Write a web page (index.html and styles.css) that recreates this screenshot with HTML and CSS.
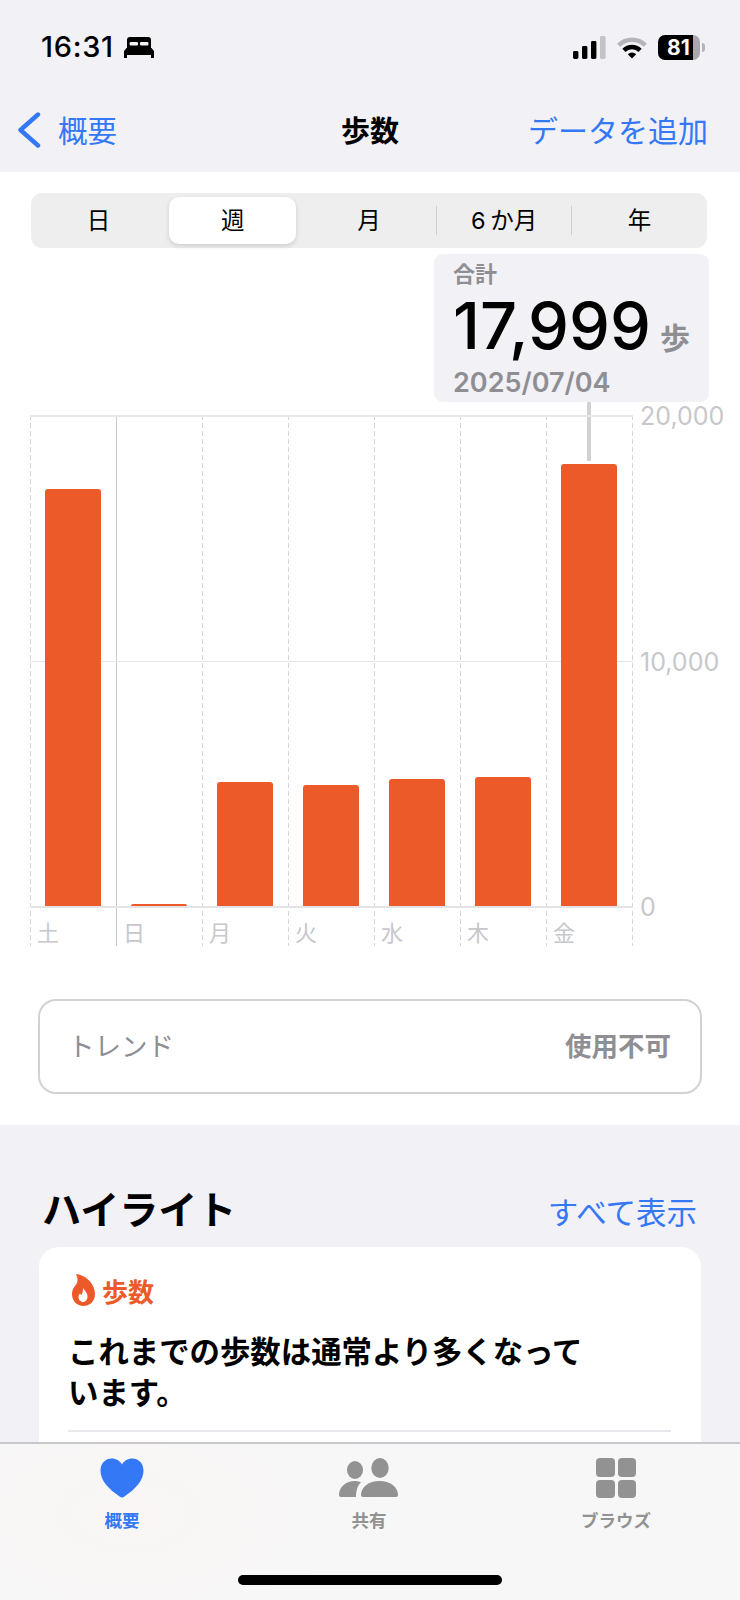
FILE: index.html
```html
<!DOCTYPE html>
<html lang="ja">
<head>
<meta charset="utf-8">
<title>歩数</title>
<link rel="stylesheet" href="styles.css">
</head>
<body>
<div class="screen">
  <header class="status">
    <div class="status-left">
      <span class="time">16:31</span>
      <svg class="bed" width="30" height="21" viewBox="0 0 30 21">
        <path d="M6 0h18a3 3 0 0 1 3 3v8H3V3a3 3 0 0 1 3-3z" fill="#000"/>
        <rect x="5.6" y="5" width="8.4" height="3.4" rx="1" fill="#f1f1f6"/>
        <rect x="16" y="5" width="8.4" height="3.4" rx="1" fill="#f1f1f6"/>
        <path d="M2.5 11h25L30 14v4H0v-4z" fill="#000"/>
        <rect x="0" y="18" width="3" height="3" fill="#000"/>
        <rect x="27" y="18" width="3" height="3" fill="#000"/>
      </svg>
    </div>
    <div class="status-right">
      <svg class="signal" width="33" height="23" viewBox="0 0 33 23">
        <rect x="0" y="15" width="5.4" height="8" rx="1.4" fill="#000"/>
        <rect x="9" y="10" width="5.4" height="13" rx="1.4" fill="#000"/>
        <rect x="18" y="5" width="5.4" height="18" rx="1.4" fill="#000"/>
        <rect x="27" y="0" width="5.6" height="23" rx="1.4" fill="#c4c4c8"/>
      </svg>
      <svg class="wifi" width="30" height="23" viewBox="0 0 30 23">
        <path d="M1.7 9.2A18.8 18.8 0 0 1 28.3 9.2" fill="none" stroke="#b5b5b9" stroke-width="4.4"/>
        <path d="M6.9 14.4A11.5 11.5 0 0 1 23.1 14.4" fill="none" stroke="#000" stroke-width="4.4"/>
        <path d="M15 22.5L10.8 18.3A6 6 0 0 1 19.2 18.3Z" fill="#000"/>
      </svg>
      <div class="battery"><span class="battery-level">81</span><span class="battery-cap"></span></div>
    </div>
  </header>

  <nav class="nav">
    <a class="nav-back">
      <svg width="24" height="36" viewBox="0 0 24 36"><path d="M21 2.5L3.5 18L21 33.5" fill="none" stroke="#3478f6" stroke-width="4.4" stroke-linecap="round" stroke-linejoin="round"/></svg>
      <span>概要</span>
    </a>
    <div class="nav-title">歩数</div>
    <a class="nav-action">データを追加</a>
  </nav>

  <main class="detail">
    <div class="segments">
      <div class="segment">日</div>
      <div class="segment selected">週</div>
      <div class="segment">月</div>
      <div class="segment divided">6 か月</div>
      <div class="segment divided">年</div>
    </div>

    <aside class="tip">
      <div class="tip-label">合計</div>
      <div class="tip-value"><span class="tip-number">17,999</span><span class="tip-unit">歩</span></div>
      <div class="tip-date">2025/07/04</div>
    </aside>

    <section class="chart">
      <div class="plot">
        <div class="midline"></div>
        <div class="day">
          <div class="bar-area"><div class="bar" style="height:417px"></div></div>
          <div class="day-label">土</div>
        </div>
        <div class="day cursor">
          <div class="bar-area"><div class="bar" style="height:2px"></div></div>
          <div class="day-label">日</div>
        </div>
        <div class="day">
          <div class="bar-area"><div class="bar" style="height:124px"></div></div>
          <div class="day-label">月</div>
        </div>
        <div class="day">
          <div class="bar-area"><div class="bar" style="height:121px"></div></div>
          <div class="day-label">火</div>
        </div>
        <div class="day">
          <div class="bar-area"><div class="bar" style="height:127px"></div></div>
          <div class="day-label">水</div>
        </div>
        <div class="day">
          <div class="bar-area"><div class="bar" style="height:129px"></div></div>
          <div class="day-label">木</div>
        </div>
        <div class="day last">
          <div class="bar-area"><div class="bar" style="height:442px"></div></div>
          <div class="day-label">金</div>
        </div>
      </div>
      <div class="axis">
        <span>20,000</span>
        <span>10,000</span>
        <span>0</span>
      </div>
    </section>

    <div class="trend">
      <span class="trend-label">トレンド</span>
      <span class="trend-value">使用不可</span>
    </div>
  </main>

  <section class="highlights">
    <div class="highlights-head">
      <h2>ハイライト</h2>
      <a>すべて表示</a>
    </div>
    <article class="card">
      <div class="card-tag">
        <svg width="23" height="32" viewBox="0 0 23 32">
          <path d="M4 0C13 1 23 9 23 20C23 27 18 32 11.5 32C5 32 0 27 0 20C0 15.5 2.5 12.5 4.5 10C6 7.5 6 4 4 0Z" fill="#ed5a29"/>
          <path d="M11 14C14 17.5 15.5 20 15.5 22.5C15.5 25.5 13.5 28 11 28C8.5 28 6.5 25.5 6.5 23C6.5 21.5 7.2 20.5 8 19.5C8.5 20.3 9 20.8 9.5 21C10.5 19 11.2 16.5 11 14Z" fill="#fff"/>
        </svg>
        <span>歩数</span>
      </div>
      <p class="card-text">これまでの歩数は通常より多くなって<br>います。</p>
      <div class="card-rule"></div>
    </article>
  </section>

  <footer class="tabbar">
    <div class="tabs">
      <div class="tab active">
        <svg width="44" height="40" viewBox="0 0 44 40"><path d="M22 39.5C21.3 39.5 20.4 39 19.6 38.4C8.5 31 0.5 22.5 0.5 12.5C0.5 5.3 5.5 0.5 11.8 0.5C16.2 0.5 19.8 2.8 22 6.4C24.2 2.8 27.8 0.5 32.2 0.5C38.5 0.5 43.5 5.3 43.5 12.5C43.5 22.5 35.5 31 24.4 38.4C23.6 39 22.7 39.5 22 39.5Z" fill="#3478f6"/></svg>
        <span>概要</span>
      </div>
      <div class="tab">
        <svg width="60" height="40" viewBox="0 0 60 40">
          <ellipse cx="16" cy="12" rx="8" ry="9" fill="#929292"/>
          <ellipse cx="41" cy="10" rx="8.7" ry="10" fill="#929292"/>
          <path d="M24 39Q22 39 22 37C22 29 30 23 40.5 23C51 23 59 29 59 37Q59 39 57 39Z" fill="#929292"/>
          <path d="M2 39Q0 39 0 37C0 29 7 23 16 23C18 23 20 23.4 22 24.2C19 27 17 32 17 39Z" fill="#929292"/>
        </svg>
        <span>共有</span>
      </div>
      <div class="tab">
        <div class="tab-grid"><i></i><i></i><i></i><i></i></div>
        <span>ブラウズ</span>
      </div>
    </div>
    <div class="home-bar"></div>
  </footer>
</div>
</body>
</html>
```
FILE: styles.css
```css
* { box-sizing: border-box; }
html, body { margin: 0; padding: 0; }
body {
  width: 740px;
  height: 1600px;
  background: #f1f1f6;
  font-family: Inter, "Noto Sans CJK JP", sans-serif;
  color: #000;
  overflow: hidden;
}
.screen {
  position: relative;
  width: 740px;
  height: 1600px;
  overflow: hidden;
  display: flex;
  flex-direction: column;
}

/* status bar */
.status {
  height: 88px;
  flex: none;
  padding: 32px 40px 0 41px;
  display: flex;
  justify-content: space-between;
  align-items: flex-start;
}
.status-left { display: flex; align-items: center; gap: 10px; height: 30px; }
.time { font-size: 29px; font-weight: 500; line-height: 30px; letter-spacing: 0.7px; }
.status-right { display: flex; align-items: center; gap: 11px; height: 30px; }
.battery {
  position: relative;
  width: 42px;
  height: 25px;
  border-radius: 7px;
  background: linear-gradient(to right, #000 0 35px, #a9a9ad 35px);
  color: #fff;
  font-size: 21px;
  font-weight: 700;
  line-height: 25px;
  padding-left: 9px;
}
.battery-cap {
  position: absolute;
  left: 44px;
  top: 8px;
  width: 3px;
  height: 9px;
  border-radius: 0 3px 3px 0;
  background: #b5b5b9;
}

/* navigation bar */
.nav {
  height: 84px;
  flex: none;
  display: grid;
  grid-template-columns: 1fr auto 1fr;
  align-items: center;
  padding: 0 32px 2px;
}
.nav-back {
  display: flex;
  align-items: center;
  gap: 17px;
  margin-left: -15px;
  color: #3478f6;
  font-size: 29.5px;
}
.nav-back svg { margin-top: 2px; }
.nav-title { font-size: 29px; font-weight: 600; }
.nav-action { justify-self: end; color: #3478f6; font-size: 30px; white-space: nowrap; }

/* detail */
.detail {
  position: relative;
  flex: none;
  height: 953px;
  background: #fff;
  padding-top: 21px;
}
.segments {
  margin-left: 31px;
  width: 676px;
  height: 55px;
  padding: 4px 0;
  border-radius: 11px;
  background: #eeeeef;
  display: grid;
  grid-template-columns: repeat(5, 1fr);
}
.segment {
  position: relative;
  display: flex;
  align-items: center;
  justify-content: center;
  padding-bottom: 3px;
  font-size: 23.5px;
  font-weight: 400;
  border-radius: 10px;
  white-space: pre;
  word-spacing: -2px;
}
.segment.selected {
  margin: 0 5px 0 3px;
  background: #fff;
  box-shadow: 0 2px 5px rgba(0, 0, 0, 0.14);
}
.segment.divided::before {
  content: "";
  position: absolute;
  left: -1px;
  top: 9px;
  height: 29px;
  width: 1px;
  background: #cfcfd3;
}

.tip {
  position: absolute;
  left: 434px;
  top: 82px;
  width: 275px;
  height: 148px;
  padding: 6px 0 0 19px;
  border-radius: 9px;
  background: #f1f1f6;
}
.tip::after {
  content: "";
  position: absolute;
  left: 153px;
  top: 100%;
  width: 4px;
  height: 59px;
  background: #d1d1d6;
}
.tip-label { font-size: 22px; font-weight: 600; color: #8e8e93; line-height: 28px; }
.tip-value { display: flex; align-items: baseline; gap: 9px; line-height: 76px; }
.tip-number { font-size: 65px; font-weight: 500; }
.tip-unit { font-size: 30px; font-weight: 600; color: #8e8e93; }
.tip-date { margin-top: -11px; font-size: 27px; font-weight: 600; color: #8e8e93; line-height: 36px; }

.chart {
  margin: 167px 0 0 30px;
  display: flex;
  align-items: flex-start;
}
.plot {
  position: relative;
  display: flex;
  height: 531px;
}
.midline {
  position: absolute;
  left: 0;
  right: 0;
  top: 246px;
  height: 1px;
  background: #e5e5ea;
}
.day {
  width: 86px;
  background-image: repeating-linear-gradient(to bottom, #d6d6da 0 5px, transparent 5px 8px);
  background-size: 1px 100%;
  background-repeat: no-repeat;
}
.day.cursor { background: linear-gradient(#c9c9cd, #c9c9cd) left / 1px 100% no-repeat; }
.day.last {
  width: 87px;
  background-image:
    repeating-linear-gradient(to bottom, #d6d6da 0 5px, transparent 5px 8px),
    repeating-linear-gradient(to bottom, #d6d6da 0 5px, transparent 5px 8px);
  background-size: 1px 100%, 1px 100%;
  background-position: left top, right top;
}
.bar-area {
  position: relative;
  height: 493px;
  padding-left: 15px;
  display: flex;
  align-items: flex-end;
  border-top: 2px solid #e8e8ec;
  border-bottom: 2px solid #e3e3e8;
}
.bar {
  width: 56px;
  background: #ed5a29;
  border-radius: 3px 3px 0 0;
}
.day-label {
  padding: 11px 0 0 7px;
  font-size: 22px;
  line-height: 28px;
  color: #c7c7cc;
}
.axis {
  margin: -14px 0 0 7px;
  height: 521px;
  display: flex;
  flex-direction: column;
  justify-content: space-between;
  font-size: 25px;
  line-height: 30px;
  color: #c7c7cc;
  white-space: nowrap;
}

.trend {
  margin: 53px 0 0 38px;
  width: 664px;
  height: 95px;
  padding: 0 29px 4px 28px;
  border: 2px solid #d1d1d6;
  border-radius: 18px;
  display: flex;
  justify-content: space-between;
  align-items: center;
}
.trend-label { font-size: 26.5px; color: #8e8e93; }
.trend-value { font-size: 26.5px; font-weight: 600; color: #8e8e93; }

/* highlights */
.highlights { flex: none; padding: 60px 39px 0; }
.highlights-head {
  display: flex;
  justify-content: space-between;
  align-items: center;
  padding: 0 4px 0 3px;
  margin-bottom: 12px;
  height: 50px;
}
.highlights-head h2 { margin: 0; font-size: 39px; font-weight: 700; line-height: 50px; }
.highlights-head a { padding-top: 1px; color: #3478f6; font-size: 30.5px; }
.card {
  background: #fff;
  border-radius: 20px;
  padding: 27px 30px 0 29px;
  height: 400px;
}
.card-tag {
  display: flex;
  align-items: center;
  gap: 7px;
  height: 32px;
  padding-left: 4px;
  color: #ed5a29;
  font-size: 26px;
  font-weight: 600;
}
.card-text {
  margin: 26px 0 0;
  font-size: 30.4px;
  font-weight: 700;
  line-height: 41px;
}
.card-rule { margin-top: 16px; height: 2px; background: #e8e8ec; }

/* tab bar */
.tabbar {
  position: absolute;
  left: 0;
  right: 0;
  bottom: 0;
  height: 158px;
  border-top: 2px solid #c8c8cc;
  background: radial-gradient(ellipse 260px 140px at 130px 70px, #f9f6f5, #f7f7f7);
  display: flex;
  flex-direction: column;
  align-items: center;
}
.tabs {
  display: grid;
  grid-template-columns: repeat(3, 247px);
  margin-left: -2px;
  padding-top: 14px;
}
.tab {
  display: flex;
  flex-direction: column;
  align-items: center;
  color: #929292;
  font-size: 17.5px;
  font-weight: 600;
  line-height: 24px;
  gap: 11px;
}
.tab.active { color: #3478f6; }
.tab svg { display: block; }
.tab-grid {
  width: 40px;
  height: 40px;
  display: grid;
  grid-template-columns: 1fr 1fr;
  gap: 3px;
}
.tab-grid i { background: #929292; border-radius: 4px; }
.home-bar {
  margin-top: 42px;
  width: 264px;
  height: 10px;
  border-radius: 5px;
  background: #000;
}
```
